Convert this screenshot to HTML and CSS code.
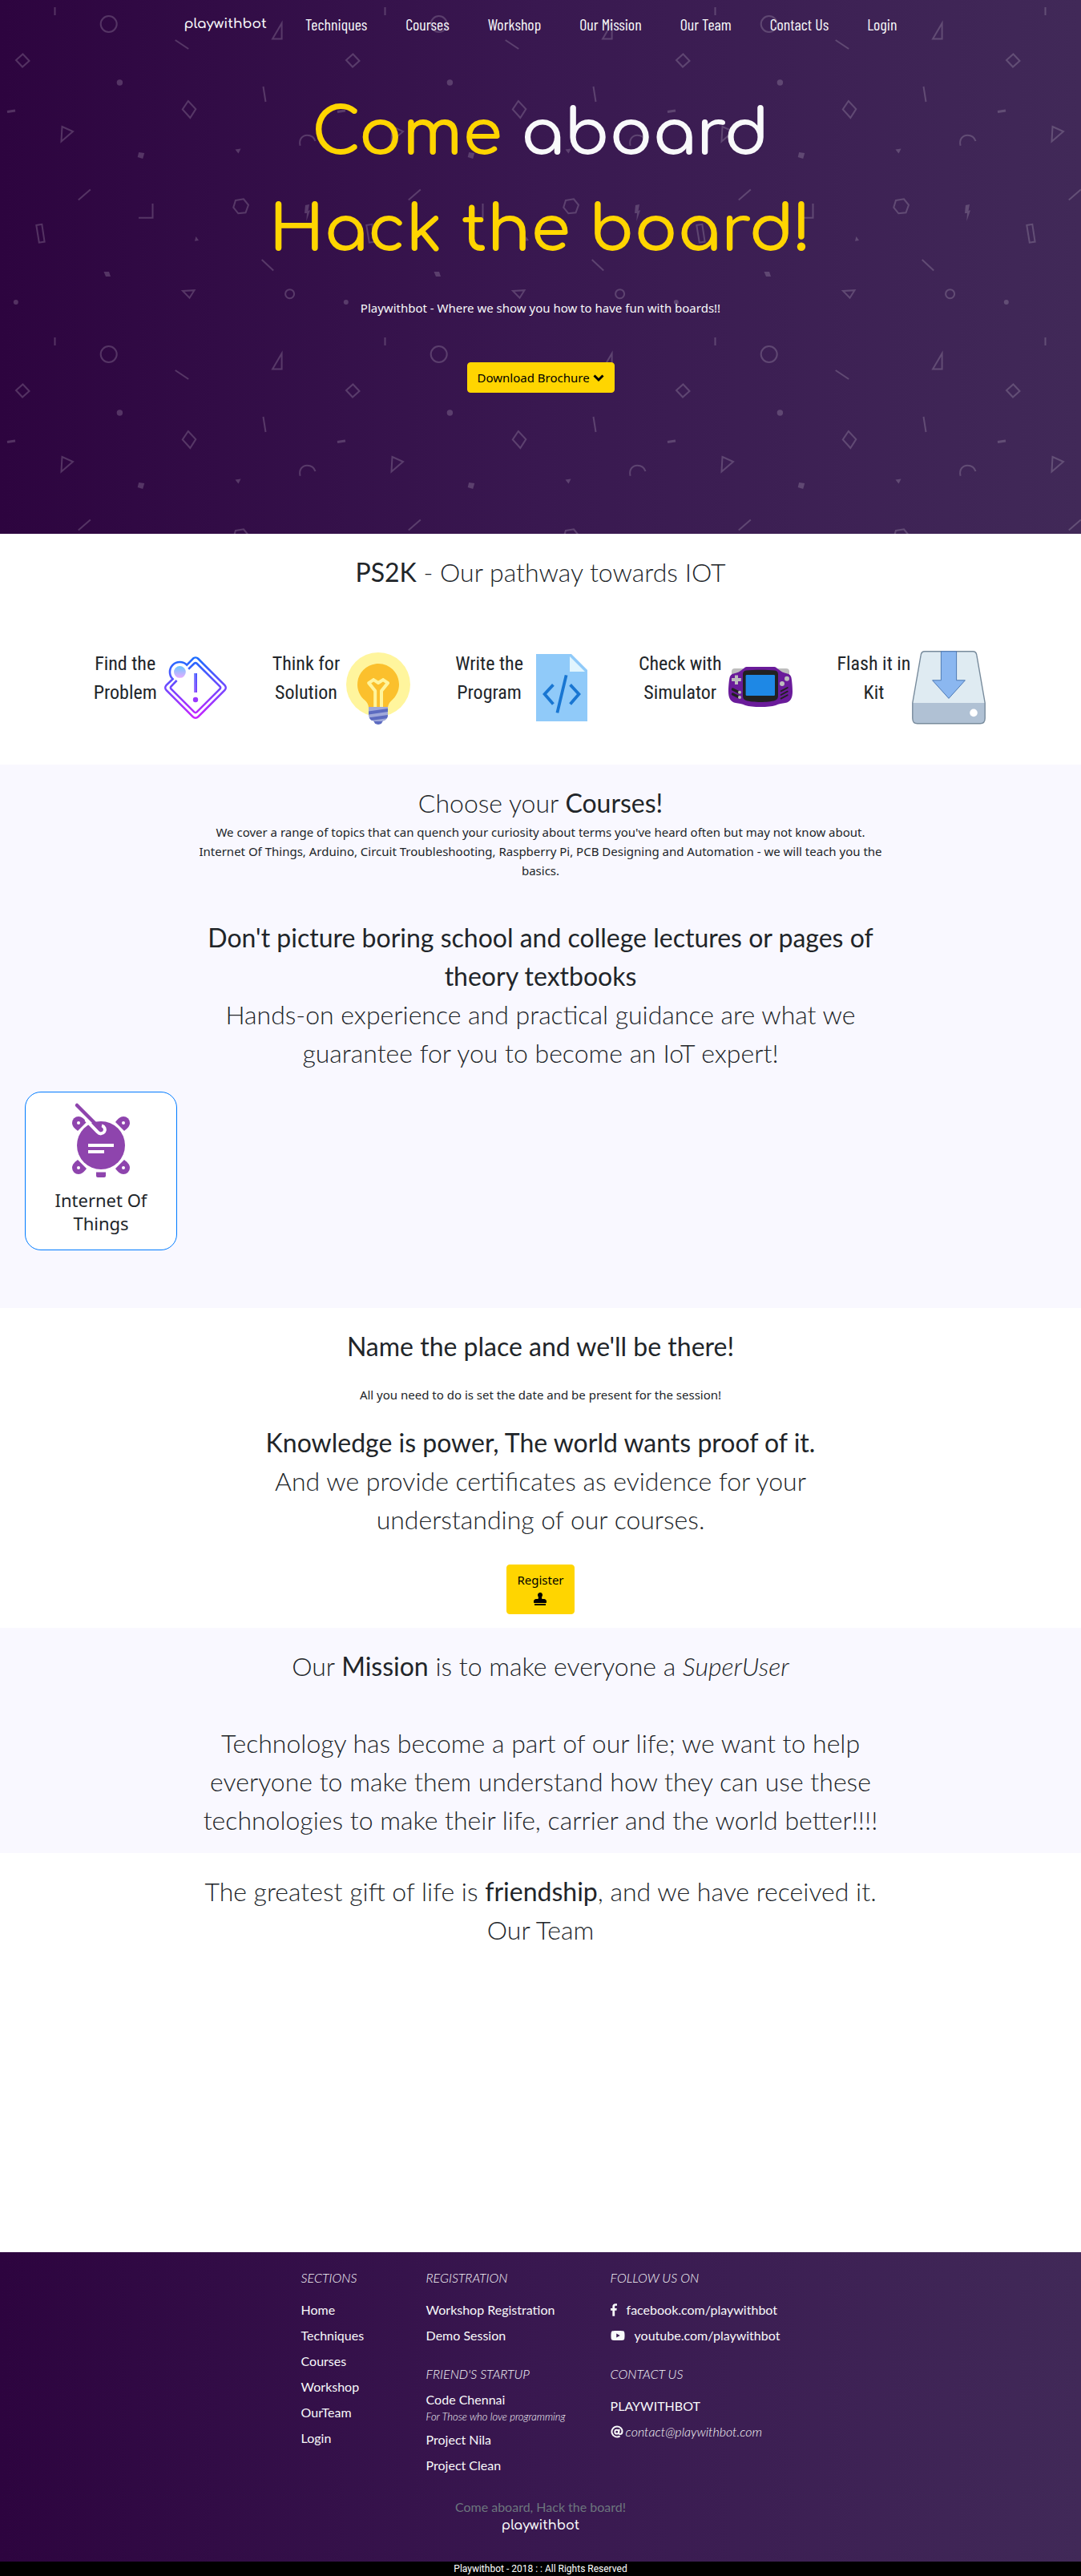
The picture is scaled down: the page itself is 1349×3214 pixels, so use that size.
FILE: index.html
```html
<!DOCTYPE html>
<html lang="en">
<head>
<meta charset="utf-8">
<meta name="viewport" content="width=device-width, initial-scale=1">
<title>playwithbot</title>
<link rel="stylesheet" href="styles.css">
</head>
<body>
<header class="hero">
  <svg class="hero-pattern" width="100%" height="100%" aria-hidden="true">
    <defs>
      <pattern id="shapes" width="412" height="412" patternUnits="userSpaceOnUse">
        <g fill="none" stroke="#fff" stroke-width="2">
          <path d="M68.5 9v10M218.700 50l16.500 11M328.500 108l3 19M112.800 236.500l-15 13M326.700 324l14.500 13.500"/>
          <path d="M9 139.500l10-1.500" stroke-width="3"/>
          <circle cx="135.700" cy="30" r="10"/>
          <circle cx="361.600" cy="366.700" r="5.500"/>
          <path d="M28.500 67.500l8 8.500-8.500 7.500-8-8.500zM351.600 29v19.500h-11.500zM234.800 126l9.500 10-7 11-9.500-10.500z"/>
          <path d="M77.500 158l13.500 6-14.500 12.500zM228 363l14.500-.8-6 9.500zM294 250l10-1.700 6 7.500-3.500 9.500-9.200 1-6-7.500z"/>
          <path d="M374.600 181.700c-2-8 3-13 8.700-13 5.500 0 9 3.500 10.200 7.300M190.500 254v17.800H173M45.300 281l7-1.200 3.300 21.800-6.800 1.100z"/>
        </g>
        <g fill="#fff">
          <circle cx="149.400" cy="103" r="3.700"/><circle cx="19.800" cy="377" r="3"/>
          <path d="M173.200 190l7 1-2 7-6.500-2zM293.500 186.500l7-1-3 6zM381 256l5-1-1.500 8 2.500-.7-4.700 13.700.7-10h-3zM244.500 295l3.500 5-5 .7zM129.500 339h6.500l2 6h-6z"/>
        </g>
      </pattern>
    </defs>
    <rect width="100%" height="100%" fill="url(#shapes)" opacity=".18"/>
  </svg>
  <nav class="nav">
    <a class="brand" href="#">playwithbot</a>
    <a href="#techniques">Techniques</a>
    <a href="#courses">Courses</a>
    <a href="#workshop">Workshop</a>
    <a href="#mission">Our Mission</a>
    <a href="#team">Our Team</a>
    <a href="#contact">Contact Us</a>
    <a href="#login">Login</a>
  </nav>
  <h1 class="title"><span class="gold">Come</span> aboard<br><span class="gold">Hack the board!</span></h1>
  <p class="tagline">Playwithbot - Where we show you how to have fun with boards!!</p>
  <button class="btn" type="button">Download Brochure
    <svg width="14" height="10" viewBox="0 0 14 10" aria-hidden="true"><path d="M1.500 1.500L7 7l5.500-5.500" fill="none" stroke="currentColor" stroke-width="3"/></svg>
  </button>
</header>

<main>
<section class="section pathway" id="techniques">
  <h2 class="heading"><b>PS2K</b> - Our pathway towards IOT</h2>
  <div class="steps">
    <div class="step"><p>Find the<br>Problem</p>
      <svg class="pic" viewBox="0 0 48 48" aria-hidden="true">
        <defs>
          <linearGradient id="edge" gradientUnits="userSpaceOnUse" x1="0" y1="5" x2="0" y2="43"><stop offset="0" stop-color="#1a6dff"/><stop offset="1" stop-color="#c822ff"/></linearGradient>
          <linearGradient id="spot" x1="0" y1="0" x2="0" y2="1"><stop offset="0" stop-color="#6dc7ff"/><stop offset="1" stop-color="#e6abff"/></linearGradient>
        </defs>
        <g fill="none" stroke="url(#edge)" stroke-width="1.300">
          <path d="M18.600 9.800l3.800-3.900a2.300 2.300 0 0 1 3.200 0l16.600 16.500a2.300 2.300 0 0 1 0 3.200L25.600 42.200a2.300 2.300 0 0 1-3.200 0L5.800 25.600a2.300 2.300 0 0 1 0-3.200l4-3.800A6.200 6.200 0 0 1 18.600 9.800z"/>
          <path d="M19.600 12.400l3.600-3.500a1.200 1.200 0 0 1 1.600 0l14.400 14.300a1.200 1.200 0 0 1 0 1.600L24.800 39.200a1.200 1.200 0 0 1-1.600 0L8.800 24.800a1.200 1.200 0 0 1 0-1.600l3.500-3.700"/>
        </g>
        <circle cx="14.200" cy="14.200" r="3.700" fill="url(#spot)"/>
        <rect x="23" y="15" width="2" height="12" fill="url(#edge)"/>
        <rect x="23" y="15" width="1" height="12" fill="#fff" opacity=".25"/>
        <circle cx="24" cy="31.500" r="1.600" fill="#9a38ff"/>
      </svg>
    </div>
    <div class="step"><p>Think for<br>Solution</p>
      <svg class="pic" viewBox="0 0 48 48" aria-hidden="true">
        <circle cx="24" cy="22" r="20" fill="#fff59d"/>
        <path fill="#fbc02d" d="M37 22c0-7.700-6.600-13.800-14.500-12.900-6 .7-10.800 5.500-11.400 11.500-.5 4.600 1.400 8.700 4.600 11.300 1.400 1.200 2.300 2.900 2.300 4.800v.3h12v-.1c0-1.800.8-3.600 2.200-4.800 2.900-2.400 4.800-6 4.800-10.100z"/>
        <path fill="#fff59d" d="M30.600 20.200l-3-2c-.3-.2-.8-.2-1.100 0L24 19.800l-2.400-1.600c-.3-.2-.8-.2-1.100 0l-3 2c-.2.200-.4.400-.4.700s0 .6.200.8l3.800 4.700V37h2V26c0-.2-.1-.4-.2-.6l-3.300-4.100 1.500-1 2.400 1.600c.3.200.8.200 1.100 0l2.400-1.600 1.500 1-3.300 4.100c-.1.200-.2.400-.2.600v11h2V26.400l3.800-4.700c.2-.2.300-.5.200-.8s-.2-.6-.4-.7z"/>
        <circle cx="24" cy="44" r="3" fill="#5c6bc0"/>
        <path fill="#9fa8da" d="M26 45h-4c-2.200 0-4-1.800-4-4v-5h12v5c0 2.200-1.800 4-4 4z"/>
        <path fill="#5c6bc0" d="M30 41l-11.600 1.600c.3.700.9 1.400 1.600 1.800l9.400-1.300c.4-.6.6-1.300.6-2.100zM18 38.700v2L30 39v-2z"/>
      </svg>
    </div>
    <div class="step"><p>Write the<br>Program</p>
      <svg class="pic" viewBox="0 0 48 48" aria-hidden="true">
        <path fill="#90caf9" d="M40 45H8V3h22l10 10z"/><path fill="#e1f5fe" d="M38.500 14H29V4.500z"/>
        <path fill="none" stroke="#1976d2" stroke-width="1.900" d="M18.700 22.200L13.300 28l5.400 6.300M29.300 22.200l5.400 5.800-5.400 6.300M26.800 16.200l-5.600 23.500"/>
      </svg>
    </div>
    <div class="step"><p>Check with<br>Simulator</p>
      <svg class="pic" viewBox="0 0 48 48" aria-hidden="true">
        <rect x="6" y="12" width="36" height="7" rx="2" fill="#bdbdbd"/>
        <path fill="#6a1b9a" d="M44 26.500c0 4-1.500 6.500-4.500 7-2 .3-4 .5-6 1.500-2.500.8-5.500 1-9.500 1s-7-.2-9.500-1c-2-1-4-1.200-6-1.500-3-.5-4.500-3-4.500-7C4 23 4.500 18 5 17c.5-1.200 2-1.800 4-2.200 2-.6 3.500-2.100 5-3.200.6-.5 1-.6 2-.6h16c1 0 1.400.1 2 .6 1.500 1.100 3 2.600 5 3.200 2 .4 3.500 1 4 2.200.5 1 1 6 1 9.500z"/>
        <path fill="#212121" d="M15 13.300c5-.5 13-.5 18 0 1.300.2 2 1 2 2.400V29c0 1.500-.5 2.500-2 3-4 1.300-14 1.300-18 0-1.500-.5-2-1.500-2-3V15.700c0-1.400.7-2.200 2-2.400z"/>
        <rect x="14.800" y="16" width="18.200" height="13" rx=".6" fill="#1e88e5"/>
        <g fill="#bdbdbd"><path d="M8 16.200h2V18h1.900v2H10v2H8v-2H6v-2h2z"/><circle cx="40.500" cy="18.400" r="1.500"/><circle cx="37.500" cy="21.500" r="1.500"/></g>
        <g stroke="#212121" stroke-linecap="round"><path stroke-width="1.600" d="M6.700 25l4 2M6.700 28l4 2"/><path stroke-width=".9" d="M36.800 26.200l4.100-2.200M36.800 28.500l4.100-2.200M36.800 30.800l4.100-2.200"/></g>
        <g fill="#bdbdbd"><circle cx="11" cy="26.900" r="1"/><circle cx="11" cy="30" r="1"/></g>
      </svg>
    </div>
    <div class="step"><p>Flash it in<br>Kit</p>
      <svg class="pic" viewBox="0 0 48 48" aria-hidden="true">
        <path fill="#dfebf2" d="M9 1.400h30c1.400 0 2.200.8 2.400 2.200l5.200 30H1.400l5.200-30C6.800 2.200 7.600 1.400 9 1.400z"/>
        <path fill="#b0c1d4" d="M1.400 33.500h45.200V43c0 2.300-.9 3.400-3 3.400H4.400c-2.100 0-3-1.100-3-3.400z"/>
        <path fill="none" stroke="#788b9c" stroke-width=".7" d="M9 1.400h30c1.400 0 2.200.8 2.400 2.200l5.200 29.900V43c0 2.300-.9 3.400-3 3.400H4.400c-2.100 0-3-1.100-3-3.400v-9.500L6.600 3.600C6.800 2.200 7.600 1.400 9 1.400z"/>
        <path fill="#8bb7f0" stroke="#4e7ab5" stroke-width=".5" d="M19.200 1.400h9.600v18h5.400L24 30.700 13.800 19.400h5.400z"/>
        <circle cx="39.500" cy="39.700" r="2.400" fill="#fff"/>
      </svg>
    </div>
  </div>
</section>

<section class="section tinted courses" id="courses">
  <div class="column">
    <h2 class="heading">Choose your <b>Courses!</b></h2>
    <p>We cover a range of topics that can quench your curiosity about terms you've heard often but may not know about.<br>Internet Of Things, Arduino, Circuit Troubleshooting, Raspberry Pi, PCB Designing and Automation - we will teach you the basics.</p>
    <h3 class="heading spaced"><b>Don't picture boring school and college lectures or pages of theory textbooks</b><br>Hands-on experience and practical guidance are what we<br>guarantee for you to become an IoT expert!</h3>
  </div>
  <div class="cards">
    <a class="card" href="#iot">
      <svg class="pic" viewBox="0 0 96 96" aria-hidden="true">
        <defs><g id="leg"><path d="M19 36c-4-3-7-6-7-10a8 8 0 0 1 8-8c4 0 7 3 10 7z"/><circle cx="20" cy="26" r="2" fill="#fff"/></g></defs>
        <g fill="#8e44ad">
          <use href="#leg"/>
          <use href="#leg" transform="translate(96 0) scale(-1 1)"/>
          <use href="#leg" transform="translate(0 108) scale(1 -1)"/>
          <use href="#leg" transform="translate(96 108) scale(-1 -1)"/>
          <circle cx="48" cy="54" r="30"/>
          <path d="M42 87.500h12V92a2 2 0 0 1-2 2h-8a2 2 0 0 1-2-2z"/>
        </g>
        <path fill="none" stroke="#fff" stroke-width="4" d="M29 22l15 15.500A5 5 0 1 0 49 29.500"/>
        <path stroke="#8e44ad" stroke-width="4.500" stroke-linecap="round" d="M18 4l30 30"/>
        <path fill="#fff" d="M32 52h32v4H32zM32 60h20v4H32z"/>
      </svg>
      <h4>Internet Of Things</h4>
    </a>
  </div>
</section>

<section class="section workshop" id="workshop">
  <div class="column">
    <h2 class="heading"><b>Name the place and we'll be there!</b></h2>
    <p class="note">All you need to do is set the date and be present for the session!</p>
    <h3 class="heading"><b>Knowledge is power, The world wants proof of it.</b><br>And we provide certificates as evidence for your<br>understanding of our courses.</h3>
    <button class="btn register" type="button">Register
      <svg width="16" height="16" viewBox="0 0 512 512" aria-hidden="true"><path fill="currentColor" d="M32 512h448v-64H32v64zm384-256h-66.560c-16.260 0-29.440-13.180-29.440-29.440v-9.460c0-27.370 8.880-53.410 21.460-77.720 9.110-17.610 12.900-38.390 9.050-60.420-6.770-38.780-38.470-70.700-77.260-77.450C212.620-9.040 160 37.330 160 96c0 14.160 3.120 27.540 8.690 39.580C182.020 164.430 192 194.700 192 226.490v.07c0 16.260-13.180 29.440-29.440 29.440H96c-53.020 0-96 42.980-96 96v32c0 17.670 14.330 32 32 32h448c17.670 0 32-14.330 32-32v-32c0-53.020-42.980-96-96-96z"/></svg>
    </button>
  </div>
</section>

<section class="section tinted mission" id="mission">
  <div class="column">
    <h2 class="heading">Our <b>Mission</b> is to make everyone a <i>SuperUser</i></h2>
    <h3 class="heading spaced">Technology has become a part of our life; we want to help<br>everyone to make them understand how they can use these<br>technologies to make their life, carrier and the world better!!!!</h3>
  </div>
</section>

<section class="section team" id="team">
  <div class="column">
    <h2 class="heading">The greatest gift of life is <b>friendship</b>, and we have received it.<br>Our Team</h2>
  </div>
</section>
</main>

<footer class="footer" id="contact">
  <div class="links">
    <div>
      <h5>SECTIONS</h5>
      <ul>
        <li><a href="#">Home</a></li><li><a href="#techniques">Techniques</a></li><li><a href="#courses">Courses</a></li>
        <li><a href="#workshop">Workshop</a></li><li><a href="#team">OurTeam</a></li><li><a href="#login">Login</a></li>
      </ul>
    </div>
    <div>
      <h5>REGISTRATION</h5>
      <ul>
        <li><a href="#workshop">Workshop Registration</a></li><li><a href="#demo">Demo Session</a></li>
      </ul>
      <h5 class="tight">FRIEND'S STARTUP</h5>
      <ul>
        <li><a href="#code">Code Chennai</a><small>For Those who love programming</small></li><li><a href="#nila">Project Nila</a></li><li><a href="#clean">Project Clean</a></li>
      </ul>
    </div>
    <div>
      <h5>FOLLOW US ON</h5>
      <ul>
        <li><a class="social" href="#facebook"><svg width="8" height="16" viewBox="0 0 264 512" aria-hidden="true"><path fill="currentColor" d="M76.700 512V283H0v-91h76.700v-71.700C76.700 42.400 124.300 0 193.800 0c33.300 0 61.900 2.500 70.200 3.600V85h-48.200c-37.800 0-45.100 18-45.100 44.300V192H256l-11.700 91h-73.600v229"/></svg>facebook.com/playwithbot</a></li>
        <li><a class="social" href="#youtube"><svg width="18" height="16" viewBox="0 0 576 512" aria-hidden="true"><path fill="currentColor" d="M549.655 124.083c-6.281-23.650-24.787-42.276-48.284-48.597C458.781 64 288 64 288 64S117.220 64 74.629 75.486c-23.497 6.322-42.003 24.947-48.284 48.597-11.412 42.867-11.412 132.305-11.412 132.305s0 89.438 11.412 132.305c6.281 23.650 24.787 41.500 48.284 47.821C117.220 448 288 448 288 448s170.780 0 213.371-11.486c23.497-6.321 42.003-24.171 48.284-47.821 11.412-42.867 11.412-132.305 11.412-132.305s0-89.438-11.412-132.305zm-317.510 213.508V175.185l142.739 81.205-142.739 81.201z"/></svg>youtube.com/playwithbot</a></li>
      </ul>
      <h5>CONTACT US</h5>
      <ul>
        <li>PLAYWITHBOT</li>
        <li><a class="mail" href="#mail"><svg width="16" height="16" viewBox="0 0 16 16" aria-hidden="true"><g fill="none" stroke="currentColor" stroke-width="2"><circle cx="7.700" cy="8.200" r="2.400"/><path d="M10.800 4.800L10.200 9c-.2 1.600.6 2 1.500 2 1.500 0 2.800-1.400 2.800-3.500C14.500 4 11.600 1.500 8 1.500a6.500 6.500 0 1 0 3.600 11.900"/></g></svg>contact@playwithbot.com</a></li>
      </ul>
    </div>
  </div>
  <p class="motto">Come aboard, Hack the board!</p>
  <p class="brand footer-brand">playwithbot</p>
</footer>
<div class="copyright">Playwithbot - 2018 : : All Rights Reserved</div>
</body>
</html>
```
FILE: styles.css
```css
* { box-sizing: border-box; }

body {
  margin: 0;
  color: #212529;
  background: #fff;
  font: 15px/24px "Segoe UI", "Noto Sans", "Open Sans", sans-serif;
  text-align: center;
}

h1, h2, h3, h4, h5, p, ul { margin: 0; padding: 0; font-weight: 400; }
ul { list-style: none; }
a { color: inherit; text-decoration: none; }

.hero, .footer {
  background: linear-gradient(to right, #2d043f, #391850 50%, #412958);
  color: #f8f9fa;
}

.hero {
  position: relative;
  display: flex;
  flex-direction: column;
  align-items: center;
  padding: 18px 16px 176px;
}
.hero-pattern { position: absolute; inset: 0; }
.nav, .title, .tagline, .hero .btn { position: relative; }

.nav {
  display: flex;
  flex-wrap: wrap;
  justify-content: center;
  gap: 48px;
  font: 20px/24px "Barlow Condensed", "Roboto Condensed", "Liberation Sans Narrow", sans-serif;
}
.brand { font-family: Comfortaa, Quicksand, Lato, sans-serif; font-size: 17px; font-weight: 600; }

.title {
  margin-top: 66px;
  font: 600 80px/120px Comfortaa, Quicksand, Lato, sans-serif;
}
.gold { color: #ffd500; }
.tagline { margin: 24px 0 56px; }

.btn {
  padding: 6px 12px;
  border: 1px solid #ffd500;
  border-radius: 4px;
  background: #ffd500;
  color: #000;
  font: inherit;
  cursor: pointer;
}

.section { padding-top: 24px; }
.tinted { background: #f9f8ff; }
.column { width: 66.666%; margin: 0 auto; padding: 0 15px; }
.heading { font: 300 32px/48px Lato, sans-serif; }
.heading b { font-weight: 400; }
.spaced { margin-top: 48px; }

.pathway { padding-bottom: 48px; }
.steps {
  display: flex;
  flex-wrap: wrap;
  justify-content: center;
  gap: 48px;
  margin-top: 72px;
}
.step { display: flex; }
.step p { font: 24px/36px "Roboto Condensed", "Liberation Sans Narrow", sans-serif; }
.pic { display: block; width: 96px; height: 96px; }

.courses { padding-bottom: 72px; }
.cards { display: flex; flex-wrap: wrap; gap: 30px; margin-top: 24px; padding: 0 31px; }
.card {
  display: flex;
  flex-direction: column;
  align-items: center;
  width: 190px;
  padding: 12px 24px 18px;
  border: 1px solid #007bff;
  border-radius: 20px;
  background: #fff;
}
.card h4 { margin-top: 12px; font-size: 22px; line-height: 29px; }

.workshop { padding-bottom: 17px; }
.note { margin: 24px 0; }
.register { display: inline-flex; flex-direction: column; align-items: center; margin-top: 32px; }
.register svg { margin: 4px 0; }

.mission { padding-bottom: 17px; }
.team { padding-bottom: 378px; }

.footer { padding: 20px 16px 34px; font-family: Lato, sans-serif; font-size: 16px; }
.links {
  display: grid;
  grid-template-columns: 93px 167px auto;
  justify-content: center;
  column-gap: 63px;
  text-align: left;
}
.links h5 { margin: 24px 0 16px; font: italic 300 16px/24px Lato, sans-serif; }
.links h5:first-child { margin-top: 0; }
.links h5.tight { margin-bottom: 8px; }
.links li { margin-bottom: 8px; }
.links small { display: block; font: italic 300 13px/18px Lato, sans-serif; white-space: nowrap; }
.social { display: flex; align-items: center; gap: 12px; }
.mail { display: flex; align-items: center; gap: 3px; font-style: italic; font-weight: 300; }
.motto { margin-top: 20px; color: #6c757d; }
.footer-brand { font-size: 16px; line-height: 22px; }

.copyright { background: #000; color: #fff; font: 12px/18px Roboto, sans-serif; }
```
